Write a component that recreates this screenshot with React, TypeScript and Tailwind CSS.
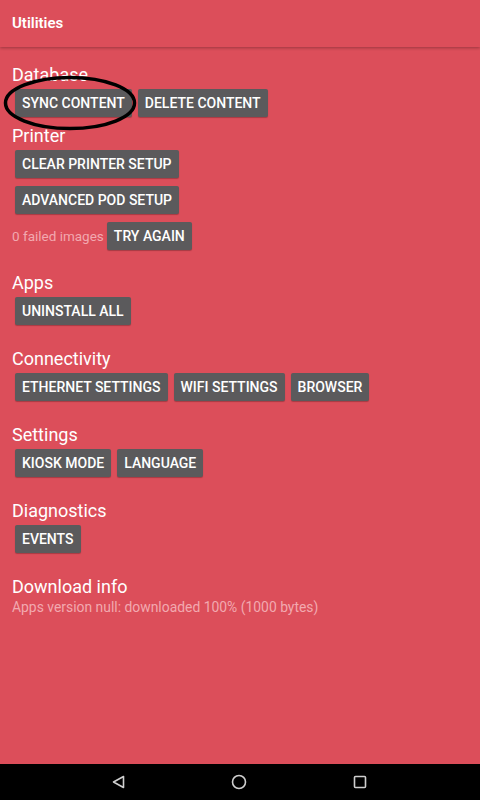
import React from "react";

const Btn = ({ children }: { children: React.ReactNode }) => (
  <button className="mx-[3px] my-1 h-7 px-[7px] bg-[#5b5a5c] text-white text-[14px] font-medium leading-none rounded-[2px] shadow-[0_1px_1px_rgba(0,0,0,0.25)] whitespace-nowrap">
    {children}
  </button>
);

const Heading = ({ children, className = "" }: { children: React.ReactNode; className?: string }) => (
  <div className={`text-[18px] leading-[21px] text-white ${className}`}>{children}</div>
);

export default function App() {
  return (
    <div
      className="relative w-[480px] h-[800px] bg-[#dc4e5a] flex flex-col overflow-hidden"
      style={{ fontFamily: "Roboto, 'Liberation Sans', sans-serif" }}
    >
      <div className="h-[47px] shrink-0 flex items-center px-3 bg-[#dc4e5a] shadow-[0_1px_3px_rgba(0,0,0,0.3)] z-10">
        <span className="text-white text-[15px] font-semibold">Utilities</span>
      </div>

      <div className="flex-1 px-3 pt-[17px] flex flex-col">
        <Heading>Database</Heading>
        <div className="flex">
          <Btn>SYNC CONTENT</Btn>
          <Btn>DELETE CONTENT</Btn>
        </div>

        <Heading className="mt-[4px]">Printer</Heading>
        <div className="flex">
          <Btn>CLEAR PRINTER SETUP</Btn>
        </div>
        <div className="flex">
          <Btn>ADVANCED POD SETUP</Btn>
        </div>
        <div className="flex items-center">
          <span className="text-[13.5px] text-[#f2a9b0]">0 failed images</span>
          <Btn>TRY AGAIN</Btn>
        </div>

        <Heading className="mt-[18px]">Apps</Heading>
        <div className="flex">
          <Btn>UNINSTALL ALL</Btn>
        </div>

        <Heading className="mt-[19px]">Connectivity</Heading>
        <div className="flex">
          <Btn>ETHERNET SETTINGS</Btn>
          <Btn>WIFI SETTINGS</Btn>
          <Btn>BROWSER</Btn>
        </div>

        <Heading className="mt-[19px]">Settings</Heading>
        <div className="flex">
          <Btn>KIOSK MODE</Btn>
          <Btn>LANGUAGE</Btn>
        </div>

        <Heading className="mt-[19px]">Diagnostics</Heading>
        <div className="flex">
          <Btn>EVENTS</Btn>
        </div>

        <Heading className="mt-[19px]">Download info</Heading>
        <div className="text-[13.9px] leading-[18px] mt-px text-[#f2a9b0]">
          Apps version null: downloaded 100% (1000 bytes)
        </div>
      </div>

      <div className="h-9 shrink-0 bg-black flex items-center justify-around px-[60px]">
        <svg width="24" height="24" viewBox="0 0 24 24" className="ml-[-2px]">
          <path d="M17.5 6.5 L17.5 17.5 L7.5 12 Z" fill="none" stroke="#cfcfcf" strokeWidth="1.6" strokeLinejoin="round" />
        </svg>
        <svg width="24" height="24" viewBox="0 0 24 24">
          <circle cx="12" cy="12" r="6.5" fill="none" stroke="#cfcfcf" strokeWidth="1.6" />
        </svg>
        <svg width="24" height="24" viewBox="0 0 24 24">
          <rect x="6.5" y="6.5" width="11" height="11" rx="1" fill="none" stroke="#cfcfcf" strokeWidth="1.6" />
        </svg>
      </div>

      <svg className="absolute left-0 top-0 pointer-events-none" width="160" height="160" viewBox="0 0 160 160">
        <ellipse cx="70" cy="103" rx="64.5" ry="25.5" fill="none" stroke="#000" strokeWidth="3.5" />
      </svg>
    </div>
  );
}
